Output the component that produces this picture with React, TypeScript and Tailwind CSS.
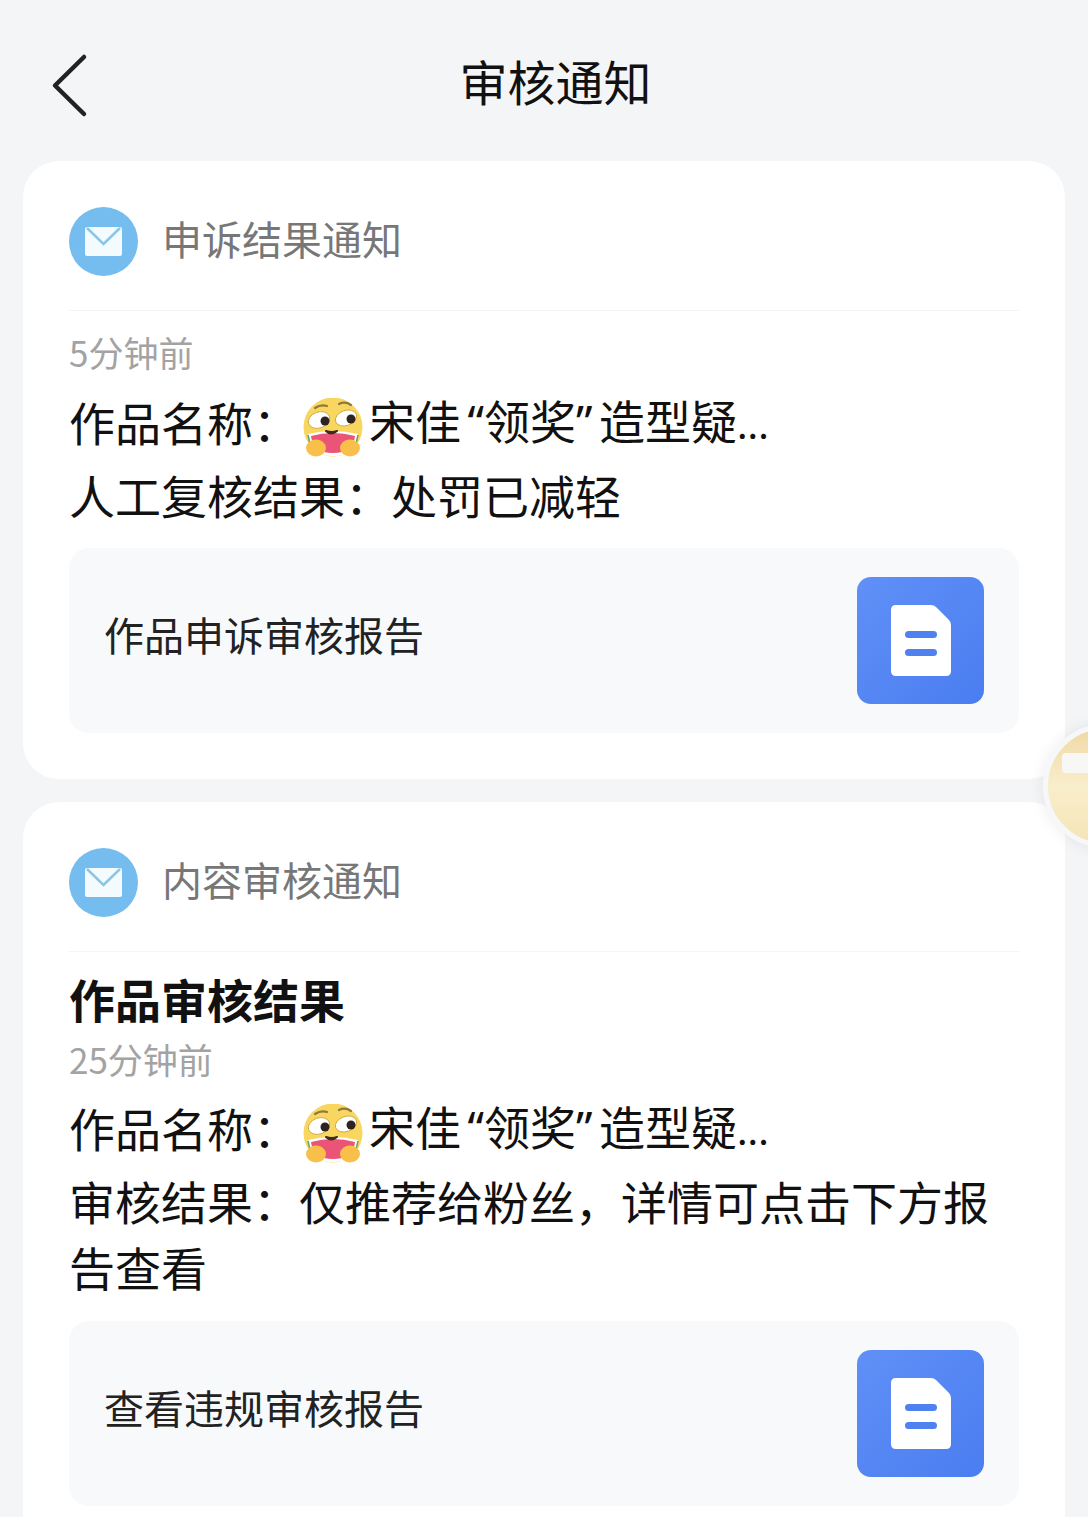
const cjk = { fontFamily: '"Noto Sans CJK SC", "Noto Sans", sans-serif' };

function Mail() {
  return (
    <svg width="69" height="69" viewBox="0 0 69 69" className="shrink-0">
      <circle cx="34.5" cy="34.5" r="34.5" fill="#74bdee" />
      <rect x="16" y="20" width="37" height="29" rx="2" fill="#f4fbff" />
      <path d="M18 21 L34.5 37 L51 21" fill="none" stroke="#8cc6e6" strokeWidth="2.5" />
    </svg>
  );
}

function Emoji() {
  return (
    <svg width="64" height="62" viewBox="0 0 64 62" className="shrink-0 mt-[10px]">
      <circle cx="32" cy="29" r="29.5" fill="#f8d660" />
      <path d="M7 36 Q32 30 57 36 Q55 58 32 58 Q9 58 7 36Z" fill="#fff" />
      <path d="M10 38 Q32 32 54 38 Q52 55 32 55 Q12 55 10 38Z" fill="#ea5476" />
      <path d="M7 37 L10 50 M57 37 L54 50" stroke="#5aa868" strokeWidth="1.5" />
      <ellipse cx="18" cy="22" rx="11" ry="8" fill="#fff" stroke="#c9a23a" strokeWidth="0.8" transform="rotate(-20 18 22)" />
      <ellipse cx="45" cy="20" rx="11" ry="7.5" fill="#fff" stroke="#c9a23a" strokeWidth="0.8" transform="rotate(-20 45 20)" />
      <circle cx="24" cy="23" r="4.5" fill="#2d2320" />
      <circle cx="50" cy="21" r="4.5" fill="#2d2320" />
      <path d="M25 33 Q30 38 36 33 Q31 35 25 33Z" fill="#3d2a20" stroke="#3d2a20" strokeWidth="2" strokeLinejoin="round" />
      <path d="M14 10 Q20 6 26 8 M38 6 Q44 3 50 7" fill="none" stroke="#8f7a3a" strokeWidth="2.2" strokeLinecap="round" />
      <ellipse cx="15" cy="50" rx="10" ry="8.5" fill="#f8c04a" />
      <ellipse cx="49" cy="50" rx="10" ry="8.5" fill="#f8c04a" />
    </svg>
  );
}

function Doc() {
  return (
    <div className="h-[127px] w-[127px] rounded-[14px] bg-gradient-to-br from-[#6090f7] to-[#4a7df0] flex items-center justify-center shrink-0">
      <svg width="60" height="71" viewBox="0 0 60 71">
        <path d="M5 0 H40 Q43 0 45 2 L58 15 Q60 17 60 20 V66 Q60 71 55 71 H5 Q0 71 0 66 V5 Q0 0 5 0Z" fill="#fff" />
        <rect x="14" y="26" width="32" height="7" rx="3.5" fill="#4f82ef" />
        <rect x="14" y="44" width="32" height="7" rx="3.5" fill="#4f82ef" />
      </svg>
    </div>
  );
}

function Header({ title }: { title: string }) {
  return (
    <div className="flex items-start gap-[24px] pt-[46px] pb-[34px] border-b border-[#f3f4f6]">
      <Mail />
      <span className="text-[40px] leading-[60px] text-[#777777] mt-[1px]">{title}</span>
    </div>
  );
}

function Report({ label }: { label: string }) {
  return (
    <div className="h-[185px] rounded-[20px] bg-[#f8f9fb] flex items-center justify-between pl-[35px] pr-[35px]">
      <span className="text-[40px] leading-[50px] text-[#222] -mt-[14px]">{label}</span>
      <Doc />
    </div>
  );
}

function NameLine() {
  return (
    <div className="flex items-center h-[72px] text-[46px] leading-[60px] text-[#111] whitespace-nowrap">
      <span className="w-[232px] -mt-[6px]">作品名称：</span>
      <Emoji />
      <span className="-mt-[6px] ml-[4px]">
        宋佳<span className="inline-block w-[23px] text-right" style={{ fontFamily: '"Noto Sans", sans-serif' }}>“</span>领奖<span className="inline-block w-[23px] text-left" style={{ fontFamily: '"Noto Sans", sans-serif' }}>”</span>造型疑<span className="text-[38px]">...</span>
      </span>
    </div>
  );
}

export default function App() {
  return (
    <div style={cjk} className="relative h-[1517px] w-[1088px] overflow-hidden bg-[#f4f5f7]">
      <div className="relative h-[161px]">
        <div className="absolute left-[50px] top-[52px]">
          <svg width="40" height="66" viewBox="0 0 40 66">
            <path d="M34 5 L5 33.5 L34 62" fill="none" stroke="#222" strokeWidth="4.5" strokeLinecap="round" strokeLinejoin="round" />
          </svg>
        </div>
        <div className="pt-[50px] text-center text-[48px] leading-[60px] text-[#111] pl-[23px]">审核通知</div>
      </div>

      <div className="mx-[23px] h-[618px] rounded-[36px] bg-white px-[46px]">
        <Header title="申诉结果通知" />
        <div className="mt-[23px] text-[35px] leading-[36px] text-[#a3a3a3]">5分钟前</div>
        <div className="mt-[18px]"><NameLine /></div>
        <div className="mt-[1px] h-[72px] text-[46px] leading-[66px] text-[#111] whitespace-nowrap">人工复核结果：处罚已减轻</div>
        <div className="mt-[15px]"><Report label="作品申诉审核报告" /></div>
      </div>

      <div className="mx-[23px] mt-[23px] rounded-[36px] bg-white px-[46px] h-[760px]">
        <Header title="内容审核通知" />
        <div className="mt-[16px] text-[46px] leading-[60px] font-bold text-[#111]">作品审核结果</div>
        <div className="text-[35px] leading-[36px] text-[#a3a3a3] mt-[13px]">25分钟前</div>
        <div className="mt-[17px]"><NameLine /></div>
        <div className="text-[46px] leading-[66px] text-[#111] mt-[1px]">审核结果：仅推荐给粉丝，详情可点击下方报告查看</div>
        <div className="mt-[22px]"><Report label="查看违规审核报告" /></div>
      </div>

      <div className="absolute left-[1043px] top-[724px] h-[124px] w-[124px] rounded-full border-[5px] border-[#f6f7f8] bg-gradient-to-b from-[#f0d8a4] via-[#f9eecb] to-[#f5e4b6] shadow-[0_0_16px_rgba(0,0,0,0.08)]">
        <div className="absolute left-[14px] top-[24px] h-[20px] w-[60px] rounded-[4px] bg-[#f7f7f6]" />
      </div>
    </div>
  );
}
